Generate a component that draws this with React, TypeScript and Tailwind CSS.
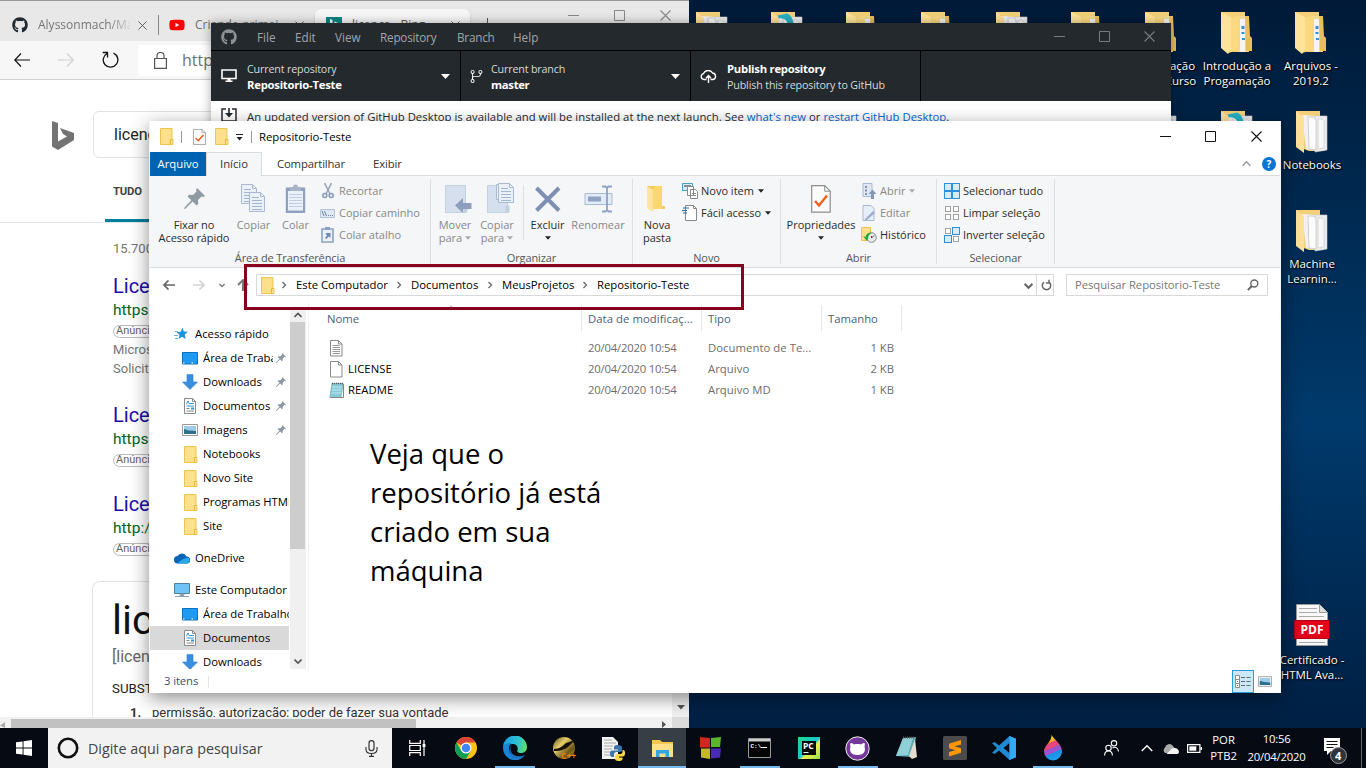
import React from 'react';
import { FaGithub, FaYoutube } from 'react-icons/fa';
import { GoGitBranch } from 'react-icons/go';

type Kids = { children?: React.ReactNode };

/* ---------- shared glyphs ---------- */

const FolderSmall = () => (
  <svg width="14" height="17" viewBox="0 0 14 17" className="shrink-0">
    <path d="M.5.5h11.500v11h1v5H.5z" fill="#ffe08a" stroke="#eac54f" />
    <path d="M10.500 11.500v5M10.500 11.500h2.500" stroke="#e3b83a" fill="none" />
  </svg>
);

const CheckDoc = ({ w, h }: { w: number; h: number }) => (
  <svg width={w} height={h} viewBox="0 0 20 28" preserveAspectRatio="none" className="shrink-0">
    <path d="M.7.7h13l5.500 5.500v21H.7z" fill="#fbfbfb" stroke="#8d8d8d" strokeWidth="1.200" />
    <path d="M13.700.7v5.500h5.500" fill="none" stroke="#8d8d8d" />
    <path d="M4 16l4 4.500 8-10" fill="none" stroke="#f0601c" strokeWidth="2.400" />
  </svg>
);

const Pin = ({ s, c }: { s: number; c: string }) => (
  <svg width={s} height={s} viewBox="0 0 20 20" className="shrink-0" fill={c}>
    <path d="M12.500 0L20 7.500l-1.500 1-1.800-.4-3.400 3.400.3 3.600-1.600 1.500-3.800-3.800L1.500 19.500 0 20l.5-1.500L7 11.600 3.300 8l1.600-1.600 3.700.3 3.300-3.300-.4-1.900z" />
  </svg>
);

const Caret = ({ c = '#222' }: { c?: string }) => (
  <svg width="6" height="4" viewBox="0 0 6 4" className="shrink-0"><path d="M0 .3h6L3 3.700z" fill={c} /></svg>
);

const Chevron = ({ d, s = 8, c = '#555', sw = 1.6 }: { d: string; s?: number; c?: string; sw?: number }) => (
  <svg width={s} height={s} viewBox="0 0 8 8" className="shrink-0"><path d={d} fill="none" stroke={c} strokeWidth={sw} /></svg>
);
const UP = 'M.5 6L4 2.500 7.500 6';
const DOWN = 'M.5 2.500L4 6l3.500-3.500';
const RIGHT = 'M2.500 1l3 3-3 3';

const Minus = ({ c, s = 11 }: { c: string; s?: number }) => (
  <svg width={s} height={s} viewBox="0 0 11 11"><path d="M0 5.500h11" stroke={c} /></svg>
);
const Square = ({ c, s = 11 }: { c: string; s?: number }) => (
  <svg width={s} height={s} viewBox="0 0 11 11"><path d="M.5.5h10v10H.5z" fill="none" stroke={c} /></svg>
);
const Cross = ({ c, s = 11 }: { c: string; s?: number }) => (
  <svg width={s} height={s} viewBox="0 0 11 11"><path d="M.5.5l10 10M10.500.5l-10 10" stroke={c} strokeWidth="1.100" /></svg>
);

/* ---------- desktop ---------- */

const DesktopFolder = ({ kind }: { kind: 'docs' | 'side' | 'teal' }) => (
  <svg width="34" height="44" viewBox="0 0 34 44" className="shrink-0">
    <path d="M1 1h24v22h4v18H14L1 36z" fill="#f3cf78" />
    {kind === 'side' && (
      <>
        <path d="M17 5h11v36H18z" fill="#f0d98f" />
        <path d="M20 8h5v33h-5z" fill="#f4f4f4" />
        <path d="M21.500 15h3v3h-3zM21.500 21h3v2h-3zM22 27h3v2h-3z" fill="#3b8fcb" />
        <path d="M25 5h4l1 20 2 2v13h-6z" fill="#e9bf5c" />
        <path d="M1 1l10 5v33l-3 4-7-6z" fill="#ffe39a" />
        <path d="M11 6l8-1v34l-11 3 3-4z" fill="#fbd981" />
      </>
    )}
    {kind !== 'side' && (
      <>
        <path d="M7 5l14 1 1 35-11-2z" fill="#f1f1f1" />
        <path d="M20 6h12v34l-12 2z" fill="#ededed" stroke="#cfcfcf" strokeWidth=".6" />
        <path d="M23 9h4l2 2v27l-6 1z" fill="#f8f8f8" stroke="#c8c8c8" strokeWidth=".6" />
        <path d="M13 7h6l2 3v30l-7-1z" fill="#fbfbfb" stroke="#c4c4c4" strokeWidth=".8" />
        {kind === 'teal' && <path d="M8 6c9-2 13 5 12 18 4-10 2-17-3-20z" fill="#25b2c4" stroke="#25b2c4" strokeWidth="3" />}
        <path d="M1 1l8 6v36l-8-6z" fill="#ffe09a" />
      </>
    )}
  </svg>
);

const DesktopLabel = ({ children }: Kids) => (
  <div className="w-[84px] text-center text-[11.500px] leading-[15px] whitespace-pre text-white [text-shadow:1px_1px_2px_#000,0_0_2px_#000]">
    {children}
  </div>
);

const folderRow: { x: string; kind: 'docs' | 'side' | 'teal' }[] = [
  { x: 'left-[695px]', kind: 'docs' },
  { x: 'left-[770px]', kind: 'teal' },
  { x: 'left-[845px]', kind: 'side' },
  { x: 'left-[920px]', kind: 'side' },
  { x: 'left-[995px]', kind: 'docs' },
  { x: 'left-[1070px]', kind: 'side' },
];

const DesktopItem = ({ pos, kind, label }: { pos: string; kind: 'docs' | 'side' | 'teal'; label: string }) => (
  <div className={`absolute flex w-[84px] flex-col items-center ${pos}`}>
    <DesktopFolder kind={kind} />
    <div className="h-[3px]" />
    <DesktopLabel>{label}</DesktopLabel>
  </div>
);

const Desktop = () => (
  <>
    {folderRow.map((f) => (
      <div key={f.x} className={`absolute top-[11px] ${f.x}`}>
        <DesktopFolder kind={f.kind} />
      </div>
    ))}
    <DesktopItem pos="left-[1119px] top-[11px]" kind="side" label={'Computação\nIntrod. Curso'} />
    <DesktopItem pos="left-[1195px] top-[11px]" kind="side" label={'Introdução a\nProgamação'} />
    <DesktopItem pos="left-[1269px] top-[11px]" kind="side" label={'Arquivos -\n2019.2'} />
    <DesktopItem pos="left-[1119px] top-[110px]" kind="teal" label="" />
    <DesktopItem pos="left-[1195px] top-[110px]" kind="teal" label="" />
    <DesktopItem pos="left-[1270px] top-[110px]" kind="docs" label="Notebooks" />
    <DesktopItem pos="left-[1270px] top-[209px]" kind="docs" label={'Machine\nLearnin...'} />
    <div className="absolute top-[603px] left-[1270px] flex w-[84px] flex-col items-center">
      <svg width="37" height="44" viewBox="0 0 37 44">
        <path d="M2.500 1.500h23l8 8v33h-31z" fill="#f8f8f8" stroke="#9a9a9a" />
        <path d="M25.500 1.500v8h8" fill="#ddd" stroke="#9a9a9a" />
        <path d="M5 5.500h18M5 9.500h18M5 13.500h25M5 39.500h26" stroke="#aaa" />
        <path d="M.5 17.500h35v18H.5z" fill="#e2001a" stroke="#b00014" />
        <text x="18" y="31" textAnchor="middle" fontFamily="Open Sans" fontWeight="700" fontSize="12" fill="#fff">PDF</text>
      </svg>
      <div className="h-[5px]" />
      <DesktopLabel>{'Certificado -\nHTML Ava...'}</DesktopLabel>
    </div>
  </>
);

/* ---------- browser ---------- */

const SearchHit = ({ url, children }: { url: string } & Kids) => (
  <div className="flex flex-col">
    <div className="h-[26px] text-[20px] leading-[26px] text-[#1a0dab]">Licença</div>
    <div className="h-[23px] text-[15.500px] leading-[23px] text-[#006621]">{url}</div>
    <div className="mt-[3px] flex h-[13px] w-[60px] items-center rounded-full border border-[#bbb] pl-[2px] text-[11px] text-[#666]">Anúncio</div>
    {children}
  </div>
);

const Browser = () => (
  <div className="absolute top-0 left-0 flex h-[728px] w-[689px] flex-col overflow-hidden bg-white">
    <div className="flex h-[41px] shrink-0 items-start border-t border-[#999] bg-[#e8e8e8] text-[12px] text-[#707070]">
      <div className="flex h-[40px] w-[158px] items-center pt-2 pl-3">
        <FaGithub size={16} color="#24292e" />
        <span className="ml-[10px] w-[92px] overflow-hidden bg-linear-to-r from-[#707070] from-75% to-[#d5d5d5] bg-clip-text whitespace-nowrap text-transparent">Alyssonmach/Ma</span>
        <span className="ml-2 flex"><Cross c="#555" s={9} /></span>
      </div>
      <div className="mt-[14px] h-[20px] w-px bg-[#888]" />
      <div className="flex h-[40px] w-[156px] items-center pt-2 pl-[10px]">
        <FaYoutube size={16} color="#ff0000" />
        <span className="ml-[10px] w-[92px] overflow-hidden whitespace-nowrap">Criando primei</span>
        <span className="ml-2 flex"><Cross c="#555" s={9} /></span>
      </div>
      <div className="mt-2 flex h-[32px] w-[155px] items-center rounded-t-md bg-[#f7f7f7] pl-[11px] shadow">
        <div className="flex size-4 items-center justify-center bg-[#0c8484]">
          <svg width="10" height="13" viewBox="0 0 10 13"><path d="M1 0l2.500 1v8L9 6 5 4l1-1.500 4 2v3L3.500 12 1 10.500z" fill="#fff" /></svg>
        </div>
        <span className="ml-[10px] text-[#555]">licença - Bing</span>
        <span className="ml-[26px] flex"><Cross c="#555" s={9} /></span>
      </div>
      <div className="ml-[17px] mt-[17px] h-[12px] w-px bg-[#555]" />
      <div className="mt-[9px] ml-[80px] flex gap-[35px]"><Minus c="#888" /><Square c="#888" /><Cross c="#888" /></div>
    </div>
    <div className="flex h-[39px] shrink-0 items-center border-b border-[#d0d0d0] bg-[#f7f7f7] pl-[14px]">
      <svg width="16" height="14" viewBox="0 0 16 14"><path d="M7 .5L.8 7 7 13.500M.8 7H16" fill="none" stroke="#111" strokeWidth="1.200" /></svg>
      <svg width="16" height="14" viewBox="0 0 16 14" className="ml-[28px]"><path d="M9 .5L15.200 7 9 13.500M15.200 7H0" fill="none" stroke="#d0d0d0" strokeWidth="1.200" /></svg>
      <svg width="17" height="18" viewBox="0 0 17 18" className="ml-[28px]">
        <path d="M5 2.500a7.300 7.300 0 1 0 6.500-.3M.7 1.500h4.800v5" fill="none" stroke="#111" strokeWidth="1.300" />
      </svg>
      <div className="ml-[19px] flex h-[31px] w-[540px] items-center rounded bg-white pl-[16px]">
        <svg width="13" height="17" viewBox="0 0 13 17"><path d="M.6 6.500h11.800v9.800H.6zM3 6.500V4a3.500 3.500 0 0 1 7 0v2.500" fill="none" stroke="#555" strokeWidth="1.200" /></svg>
        <span className="ml-[15px] text-[16px] text-[#707070]">https</span>
      </div>
    </div>
    <div className="flex h-[143px] shrink-0 flex-col border-b border-[#e6e6e6] font-['Roboto']">
      <div className="flex h-[78px] items-end">
        <svg width="22" height="30" viewBox="0 0 22 30" className="mb-[7px] ml-[52px]"><path d="M0 0l6 2v18.500l9-5-4-2.500-3-6 14 5v7L6 29 0 25.500z" fill="#737373" /></svg>
        <div className="ml-[19px] flex h-[47px] w-[580px] items-center rounded-md border border-[#e3e3e3] pl-5 text-[16px] text-[#222]">licença</div>
      </div>
      <div className="flex h-[64px] w-[80px] flex-col justify-between">
        <div className="pt-[26px] pl-[113px] text-[11.300px] leading-[16px] font-bold tracking-[-0.200px] text-[#444]">TUDO</div>
        <div className="ml-[105px] h-[3px] w-[60px] bg-[#00809d]" />
      </div>
    </div>
    <div className="flex h-[358px] shrink-0 flex-col pt-[17px] pl-[113px] font-['Roboto']">
      <div className="mb-[23px] h-[10px] text-[13px] leading-[18px] text-[#767676]">15.700</div>
      <SearchHit url="https:">
        <div className="mt-[2px] text-[13px] leading-[19px] text-[#767676]">Micros<br />Solicite</div>
      </SearchHit>
      <div className="h-[24px]" />
      <SearchHit url="https:" />
      <div className="h-[24px]" />
      <SearchHit url="http://" />
    </div>
    <div className="ml-[92px] flex h-[136px] w-[597px] shrink-0 flex-col overflow-hidden rounded-tl-lg border border-b-0 border-[#e3e3e3] pl-[19px] font-['Roboto']">
      <div className="mt-[13px] h-[50px] text-[41px] leading-[50px] text-[#111]">lice</div>
      <div className="mt-[2px] h-[20px] text-[16px] leading-[20px] text-[#666]">[licença]</div>
      <div className="mt-[11px] h-[22px] text-[13.300px] leading-[22px] text-[#222]">SUBSTANTIVO</div>
      <div className="flex text-[13px] leading-[25px] text-[#333]"><span className="w-[40px] pl-[18px] font-bold">1.</span><span className="tracking-[-0.030px]">permissão, autorização; poder de fazer sua vontade</span></div>
    </div>
    <div className="flex h-[11px] w-full shrink-0 items-end bg-[#f1f1f1]">
      <div className="flex w-[11px] items-center"><svg width="5" height="6" viewBox="0 0 5 6"><path d="M5 0v6L0 3.500z" fill="#aaa" /></svg></div>
      <div className="h-[9px] w-[405px] bg-[#c1c1c1]" />
      <svg width="6" height="7" viewBox="0 0 6 7" className="ml-[246px]"><path d="M0 0v7l4-3.500z" fill="#555" /></svg>
      <div className="ml-auto h-[11px] w-[17px] bg-[#dcdcdc]" />
    </div>
    <div className="absolute top-[80px] right-0 flex h-[637px] w-[17px] flex-col items-center justify-end bg-[#f1f1f1] pb-[7px]">
      <svg width="8" height="5" viewBox="0 0 8 5"><path d="M0 0h8L4 4.500z" fill="#555" /></svg>
    </div>
  </div>
);

/* ---------- GitHub Desktop ---------- */

const GitHubDesktop = () => (
  <div className="absolute top-[23px] left-[211px] flex h-[600px] w-[960px] flex-col bg-white shadow-[0_0_10px_rgba(0,0,0,0.35)]">
    <div className="flex h-[28px] shrink-0 items-center border-b border-black bg-[#24292e] text-[11.700px] text-[#a2a5a8]">
      <span className="ml-[10px]"><FaGithub size={16} color="#8d9093" /></span>
      <div className="ml-[20px] flex w-[797px] pt-[2px]">
        <span className="w-[38px]">File</span><span className="w-[40px]">Edit</span><span className="w-[45px]">View</span>
        <span className="w-[77px] tracking-[-0.200px]">Repository</span><span className="w-[56px] tracking-[-0.200px]">Branch</span><span>Help</span>
      </div>
      <div className="flex gap-[34px]"><Minus c="#777b7f" /><Square c="#777b7f" /><Cross c="#777b7f" /></div>
    </div>
    <div className="flex h-[50px] shrink-0 bg-[#24292e] text-[10.700px] leading-[16px] text-[#d6d9dc]">
      <div className="flex w-[250px] items-center border-r border-black pl-[10px]">
        <svg width="16" height="14" viewBox="0 0 16 14"><path d="M1 1h14v8.500H1z" fill="none" stroke="#fff" strokeWidth="1.600" /><path d="M6.500 9.500h3v2h2v1.500h-7v-1.500h2z" fill="#fff" /></svg>
        <div className="ml-[10px] w-[194px] pt-[2px]"><div className="tracking-[-0.150px]">Current repository</div><div className="text-[11.300px] font-bold tracking-[-0.250px] text-white">Repositorio-Teste</div></div>
        <svg width="9" height="5" viewBox="0 0 9 5"><path d="M0 0h9L4.500 5z" fill="#fff" /></svg>
      </div>
      <div className="flex w-[230px] items-center border-r border-black pl-[8px]">
        <GoGitBranch size={15} color="#fff" />
        <div className="ml-[7px] w-[180px] pt-[2px]"><div className="tracking-[-0.150px]">Current branch</div><div className="text-[11.300px] font-bold tracking-[-0.300px] text-white">master</div></div>
        <svg width="9" height="5" viewBox="0 0 9 5"><path d="M0 0h9L4.500 5z" fill="#fff" /></svg>
      </div>
      <div className="flex w-[230px] items-center border-r border-black pl-[9px]">
        <svg width="17" height="13" viewBox="0 0 17 13"><path d="M6.500 9.500H4A3 3 0 0 1 3.500 3.600 5 5 0 0 1 12.500 3 3.300 3.300 0 0 1 13 9.500h-2.500M8.500 13V6M6 8.300L8.500 5.600 11 8.300" fill="none" stroke="#fff" strokeWidth="1.400" /></svg>
        <div className="ml-[10px] pt-[2px]"><div className="text-[11.300px] font-bold tracking-[-0.250px] text-white">Publish repository</div><div className="tracking-[-0.140px]">Publish this repository to GitHub</div></div>
      </div>
    </div>
    <div className="flex items-start pt-[7px] pl-[10px] text-[11.300px] text-[#24292e]">
      <svg width="16" height="14" viewBox="0 0 16 14"><path d="M5 1H1v12h14V1h-4" fill="none" stroke="#24292e" strokeWidth="1.500" /><path d="M7.200 0h1.600v5H12l-4 4.500L4 5h3.200z" fill="#24292e" /></svg>
      <div className="ml-[10px] leading-[18px] tracking-[0.040px] whitespace-nowrap">An updated version of GitHub Desktop is available and will be installed at the next launch. See <span className="text-[#0366d6]">what's new</span> or <span className="text-[#0366d6]">restart GitHub Desktop</span>.</div>
    </div>
  </div>
);

/* ---------- ribbon ---------- */

const Group = ({ w, label, children }: { w: string; label: string } & Kids) => (
  <div className={`flex flex-col ${w}`}>
    <div className="flex h-[74px]">{children}</div>
    <div className="h-[16px] text-center leading-[16px] tracking-[-0.100px] text-[#555]">{label}</div>
  </div>
);
const GroupRule = () => <div className="mt-[3px] h-[85px] w-px bg-[#dfe0e2]" />;

const Big = ({ w, icon, lines, dim, arrow }: { w: string; icon: React.ReactNode; lines: string[]; dim?: boolean; arrow?: boolean }) => (
  <div className={`flex flex-col items-center ${w} ${dim ? 'text-[#888]' : 'text-[#2b2b2b]'}`}>
    <div className="flex h-[42px] items-center justify-center pt-[3px]">{icon}</div>
    {lines.map((l, i) => (
      <div key={l} className="flex h-[13px] items-center gap-[3px] leading-[13px] whitespace-nowrap">
        {l}{arrow && lines.length > 1 && i === 1 && <Caret c="#aaa" />}
      </div>
    ))}
    {arrow && lines.length === 1 && <div className="flex h-[13px] items-center"><Caret /></div>}
  </div>
);

const Small = ({ icon, text, dim, arrow }: { icon: React.ReactNode; text: string; dim?: boolean; arrow?: boolean }) => (
  <div className={`flex h-[22px] items-center whitespace-nowrap ${dim ? 'text-[#888]' : 'text-[#2b2b2b]'}`}>
    <div className="flex w-[19px] items-center">{icon}</div>
    <span>{text}</span>
    {arrow && <span className="ml-[4px]"><Caret c={dim ? '#aaa' : '#222'} /></span>}
  </div>
);

const Sheet = ({ x, y }: { x: number; y: number }) => (
  <g transform={`translate(${x} ${y})`}>
    <path d="M.5.5h11l4 4v15H.5z" fill="#e9f0f8" stroke="#a9b9d0" />
    <path d="M11.500.5v4h4" fill="none" stroke="#a9b9d0" />
    <path d="M3 5.500h7M3 8.500h10M3 11.500h10M3 14.500h10M3 17.500h10" stroke="#a3b5cf" />
  </g>
);

const CopyIcon = () => <svg width="25" height="29" viewBox="0 0 25 29"><Sheet x={0} y={0} /><Sheet x={8} y={8} /></svg>;
const Clipboard = () => (
  <svg width="21" height="30" viewBox="0 0 21 30">
    <path d="M.8 3.500h19.400v25.500H.8z" fill="#8fa1c0" /><path d="M3 7h15v19.500H3z" fill="#eaf1fa" />
    <path d="M5 3h3a2.500 2.500 0 0 1 5 0h3v4H5z" fill="#a9b4c6" />
    <path d="M4 10.500h13M4 13.500h13M4 16.500h13M4 19.500h13M4 22.500h13" stroke="#c0cde2" />
  </svg>
);
const MoveIcon = ({ copy }: { copy?: boolean }) => (
  <svg width="27" height="31" viewBox="0 0 27 31">
    <path d="M.5 2.500h20v27H.5z" fill="#d5dfee" stroke="#c3d0e3" /><path d="M18.500 22.500h4v7h-4z" fill="#c3d0e3" />
    {copy ? <g><path d="M9.500 1.500h6v15h-6z" fill="#e9f0f8" stroke="#a9b9d0" /><Sheet x={11} y={0} /></g> : <path d="M10 22.500l8-7.500v5h8.500v6H18v4z" fill="#8e9fbd" />}
  </svg>
);
const SelectIcon = ({ on }: { on: boolean[] }) => (
  <svg width="16" height="16" viewBox="0 0 16 16">
    {on.map((v, i) => (
      <rect key={i} x={(i % 2) * 8 + (v ? 0.5 : 1.5)} y={Math.floor(i / 2) * 8 + (v ? 0.5 : 1.5)} width={v ? 7 : 5} height={v ? 7 : 5} fill={v ? '#d4ecfb' : '#fff'} stroke={v ? '#2e8fdc' : '#a0a0a0'} />
    ))}
  </svg>
);

const Ribbon = () => (
  <div className="flex h-[92px] shrink-0 border-b border-[#dadbdc] bg-[#f5f6f7] text-[11px]">
    <Group w="w-[280px]" label="Área de Transferência">
      <div className="w-[4px]" />
      <Big w="w-[80px] tracking-[-0.080px]" icon={<Pin s={21} c="#8f9ba3" />} lines={['Fixar no', 'Acesso rápido']} />
      <Big w="w-[39px]" dim icon={<CopyIcon />} lines={['Copiar']} />
      <Big w="w-[45px]" dim icon={<Clipboard />} lines={['Colar']} />
      <div className="mt-[4px] ml-[2px]">
        <Small dim text="Recortar" icon={<svg width="14" height="16" viewBox="0 0 14 16" className="ml-[2px]"><path d="M2.500 0l5.500 11M9.500 0L4 11" stroke="#9aa5b5" strokeWidth="1.600" /><circle cx="2.800" cy="12.500" r="2" fill="none" stroke="#8699bc" strokeWidth="1.600" /><circle cx="9.200" cy="12.500" r="2" fill="none" stroke="#8699bc" strokeWidth="1.600" /></svg>} />
        <Small dim text="Copiar caminho" icon={<svg width="15" height="9" viewBox="0 0 15 9"><path d="M.5.5h14v8H.5z" fill="#dfe8f4" stroke="#b4c3da" /><path d="M2 2l2 5M4.500 2l2 5M8 6.500h1M10 6.500h1M12 6.500h1" stroke="#6c7f9f" /></svg>} />
        <Small dim text="Colar atalho" icon={<svg width="14" height="16" viewBox="0 0 14 16" className="ml-px"><path d="M1 2h11v13H1z" fill="#eaf1fa" stroke="#8fa1c0" strokeWidth="1.600" /><path d="M4 0h5v3H4z" fill="#8fa1c0" /><path d="M4.500 6h5v5L7.800 9.300 5.500 12 4 11l2-2.500z" fill="#6f86b0" /></svg>} />
      </div>
    </Group>
    <GroupRule />
    <Group w="w-[201px]" label="Organizar">
      <div className="w-[3px]" />
      <Big w="w-[42px]" dim arrow icon={<span className="pl-[6px]"><MoveIcon /></span>} lines={['Mover', 'para']} />
      <Big w="w-[42px]" dim arrow icon={<span className="pl-[6px]"><MoveIcon copy /></span>} lines={['Copiar', 'para']} />
      <div className="mt-[9px] ml-[5px] h-[55px] w-px bg-[#dfe0e2]" />
      <Big w="w-[47px]" arrow icon={<svg width="26" height="26" viewBox="0 0 26 26" className="ml-px"><path d="M1.500 2L24 24.500M24 2L1.500 24.500" stroke="#7d90b2" strokeWidth="4" /></svg>} lines={['Excluir']} />
      <Big w="w-[54px]" dim icon={<svg width="29" height="28" viewBox="0 0 29 28"><path d="M1 8.500h27v11H1z" fill="#e3ebf6" stroke="#a9bad3" /><path d="M4 11.500h13v5H4z" fill="#8fa1c4" /><path d="M18 1.500h3.500L23 3l1.500-1.500H28M23 3v22M18 26.500h3.500L23 25l1.500 1.500H28" fill="none" stroke="#8fa1c4" strokeWidth="1.800" /></svg>} lines={['Renomear']} />
    </Group>
    <GroupRule />
    <Group w="w-[147px]" label="Novo">
      <div className="w-[4px]" />
      <Big w="w-[40px]" icon={<svg width="20" height="28" viewBox="0 0 20 28" className="mr-[3px]"><path d="M1 1h15v20h3v3H3z" fill="#f4cc5c" /><path d="M1 1l6 4v22l-6-4z" fill="#ffe59d" /><path d="M7 5l2-4h7v23H7z" fill="#fbd774" /></svg>} lines={['Nova', 'pasta']} />
      <div className="mt-[4px] ml-[5px]">
        <Small arrow text="Novo item" icon={<svg width="16" height="16" viewBox="0 0 16 16"><path d="M.5.5h10v7H.5z" fill="#d7ecf7" stroke="#4b9bc4" /><path d="M2 3h7" stroke="#333" /><path d="M5.500 3.500h6v9h-6zM8.500 6.500h5l2 2v7h-7z" fill="#fff" stroke="#888" /><path d="M10 10.500h4M10 12.500h4" stroke="#888" /></svg>} />
        <Small arrow text="Fácil acesso" icon={<svg width="16" height="16" viewBox="0 0 16 16"><path d="M3.500.5h8l3 3v12h-11z" fill="#fff" stroke="#888" /><path d="M11.500.5v3h3" fill="none" stroke="#888" /><path d="M1 3h6M0 5.500h5M1 8h4" stroke="#1a6fb8" strokeWidth="1.200" /></svg>} />
      </div>
    </Group>
    <GroupRule />
    <Group w="w-[155px]" label="Abrir">
      <div className="w-[2px]" />
      <Big w="w-[76px]" arrow icon={<CheckDoc w={20} h={28} />} lines={['Propriedades']} />
      <div className="mt-[4px] ml-[2px]">
        <Small dim arrow text="Abrir" icon={<svg width="15" height="16" viewBox="0 0 15 16" className="ml-px"><path d="M1 .5h9v13H1z" fill="#dfe8f4" stroke="#a9b9d0" /><path d="M3 3h2v2H3zM3 6.500h2v2H3zM3 10h2v2H3z" fill="#7d90b2" /><path d="M9 16v-5H6.500l4-4.500 4 4.500H12v5z" fill="#8396b8" /></svg>} />
        <Small dim text="Editar" icon={<svg width="14" height="16" viewBox="0 0 14 16" className="ml-px"><path d="M1 .5h8l3 3v12H1z" fill="#e6eef8" stroke="#a9b9d0" /><path d="M3 14l8-8 2 2-8 7H3z" fill="#9db0d0" /></svg>} />
        <Small text="Histórico" icon={<svg width="16" height="16" viewBox="0 0 16 16"><path d="M.5.5h9v13h-9z" fill="#ffe08a" stroke="#eac54f" /><circle cx="10.500" cy="10.500" r="4.800" fill="#e9e9e9" stroke="#888" /><path d="M10.500 11l2.500-2.500M10.500 11v-2" stroke="#444" fill="none" /><path d="M2 9l4 5 1-2c0-3 1-5 4-6-4-.5-6 1-6.500 4z" fill="#21a637" /></svg>} />
      </div>
    </Group>
    <GroupRule />
    <Group w="w-[117px]" label="Selecionar">
      <div className="mt-[4px] ml-[7px]">
        <Small text="Selecionar tudo" icon={<SelectIcon on={[true, true, true, true]} />} />
        <Small text="Limpar seleção" icon={<SelectIcon on={[false, false, false, false]} />} />
        <Small text="Inverter seleção" icon={<SelectIcon on={[false, true, true, false]} />} />
      </div>
    </Group>
    <GroupRule />
  </div>
);

/* ---------- explorer ---------- */

const DesktopIcon = () => <svg width="16" height="13" viewBox="0 0 16 13"><path d="M.5.5h15v11.500H.5z" fill="#1e9bf0" stroke="#0e72bd" /><path d="M1 11h14" stroke="#fff" strokeDasharray="1.500 7" /></svg>;
const DownloadIcon = () => <svg width="16" height="16" viewBox="0 0 16 16"><path d="M5 .5h6V8h4.500L8 15.500.5 8H5z" fill="#3a8ee0" stroke="#2f7fce" strokeWidth=".6" /></svg>;
const DocIcon = () => (
  <svg width="13" height="16" viewBox="0 0 13 16"><path d="M.5.5h8l3 3v12H.5z" fill="#fff" stroke="#8a8a8a" /><path d="M8.500.5v3h3" stroke="#8a8a8a" fill="none" /><path d="M2.500 6l1.500-3 1.500 3M6 5.500h4M2.500 8h7.500" stroke="#3a93d6" fill="none" /><path d="M2.500 10.500h3M2.500 13h7.500" stroke="#888" /><path d="M7 9.500h3v2H7z" fill="#3a93d6" /></svg>
);
const PicIcon = ({ w = 16, h = 12 }: { w?: number; h?: number }) => (
  <svg width={w} height={h} viewBox="0 0 16 12"><path d="M.5.5h15v11H.5z" fill="#fff" stroke="#999" /><path d="M2 2h12v8H2z" fill="#9ecbe8" /><path d="M2 5l5 1.500 7 .5v3H2z" fill="#2c6e8c" /></svg>
);

const NavRow = ({ icon, text, deep, pin, sel }: { icon: React.ReactNode; text: string; deep?: boolean; pin?: boolean; sel?: boolean }) => (
  <div className={`flex h-[24px] w-[139px] shrink-0 items-center overflow-hidden whitespace-nowrap ${deep ? 'pl-[32px]' : 'pl-[24px]'} ${sel ? 'bg-[#d9d9d9]' : ''}`}>
    <div className="flex w-[16px] shrink-0 justify-center">{icon}</div>
    <span className={`ml-[5px] overflow-hidden ${pin ? 'w-[70px] shrink-0' : ''}`}>{text}</span>
    {pin && <span className="ml-[3px]"><Pin s={10} c="#8e99a3" /></span>}
  </div>
);
const NavFolder = () => <span className="ml-[2px] flex"><FolderSmall /></span>;

const Sidebar = () => (
  <div className="flex h-[366px] w-[156px]">
    <div className="flex w-[140px] flex-col overflow-hidden pt-[19px] text-black">
      <NavRow text="Acesso rápido" icon={<svg width="16" height="14" viewBox="0 0 16 14"><path d="M8.500.5l1.300 4 4.200.3-3.300 2.700 1 4.500-3.700-2.300L4.500 12l1-4.200L2.500 5.200l4.200-.5z" fill="#1e90e0" /><path d="M1 4.500h3M0 8.500h4M1 11.500h3" stroke="#6ab7ee" /></svg>} />
      <NavRow deep pin text="Área de Traba" icon={<DesktopIcon />} />
      <NavRow deep pin text="Downloads" icon={<DownloadIcon />} />
      <NavRow deep pin text="Documentos" icon={<DocIcon />} />
      <NavRow deep pin text="Imagens" icon={<PicIcon />} />
      <NavRow deep text="Notebooks" icon={<NavFolder />} />
      <NavRow deep text="Novo Site" icon={<NavFolder />} />
      <NavRow deep text="Programas HTML" icon={<NavFolder />} />
      <NavRow deep text="Site" icon={<NavFolder />} />
      <div className="h-[8px] shrink-0" />
      <NavRow text="OneDrive" icon={<svg width="16" height="11" viewBox="0 0 16 11"><path d="M4 10.500A3.700 3.700 0 0 1 3.500 3 5 5 0 0 1 12.500 3.500 3.500 3.500 0 0 1 13 10.500z" fill="#0a64b8" /><path d="M3 10.500L9 6l5-1.500A3.200 3.200 0 0 1 13 10.500z" fill="#28a8ea" /></svg>} />
      <div className="h-[8px] shrink-0" />
      <NavRow text="Este Computador" icon={<svg width="16" height="15" viewBox="0 0 16 15"><path d="M.5.5h15v10H.5z" fill="#6fc3f5" stroke="#4b7f9f" /><path d="M6 11h4v1.500H6zM1 13.500h14" fill="#8aa" stroke="#8fa3b3" /></svg>} />
      <NavRow deep text="Área de Trabalho" icon={<DesktopIcon />} />
      <NavRow deep sel text="Documentos" icon={<DocIcon />} />
      <NavRow deep text="Downloads" icon={<DownloadIcon />} />
    </div>
    <div className="mt-[4px] flex h-[362px] w-[16px] flex-col items-center justify-between bg-[#f0f0f0]">
      <div className="flex h-[15px] items-center"><Chevron d={UP} c="#555" /></div>
      <div className="h-[227px] w-[15px] self-start bg-[#cdcdcd]" />
      <div className="h-[104px]" />
      <div className="flex h-[16px] items-center"><Chevron d={DOWN} c="#555" /></div>
    </div>
  </div>
);

const files = [
  { name: '', date: '20/04/2020 10:54', type: 'Documento de Te...', size: '1 KB' },
  { name: 'LICENSE', date: '20/04/2020 10:54', type: 'Arquivo', size: '2 KB' },
  { name: 'README', date: '20/04/2020 10:54', type: 'Arquivo MD', size: '1 KB' },
];

const FileIcon = ({ i }: { i: number }) =>
  i === 2 ? (
    <svg width="16" height="17" viewBox="0 0 16 17"><path d="M3 1.500h11L12 15.500H.8z" fill="#86cbd8" stroke="#68a6b3" strokeWidth=".7" /><path d="M14.500 2v13.500H2" fill="none" stroke="#8b8378" /><path d="M3 5h10M3 8h9.500M2.500 11h10" stroke="#c2e8ee" /><path d="M3 1.500h12" stroke="#555" strokeWidth="1.500" strokeDasharray="1 1" /></svg>
  ) : (
    <svg width="13" height="17" viewBox="0 0 13 17" className="ml-px"><path d="M.5.5h8l3.500 3.500v12H.5z" fill="#fff" stroke="#8a8a8a" /><path d="M8.500.5V4H12" fill="none" stroke="#8a8a8a" />{i === 0 && <path d="M2.500 5.500h7M2.500 7.500h7.500M2.500 9.500h7.500M2.500 11.500h7.500M2.500 13.500h7.500" stroke="#9a9a9a" />}</svg>
  );

const FileList = () => (
  <div className="flex flex-col border-l border-[#f0f0f0] pt-[2px]">
    <div className="flex h-[26px] leading-[27px] text-[#4c607a]">
      <div className="relative w-[273px] border-r border-[#e5e5e5] pl-[18px]">Nome
        <span className="absolute top-[-1px] left-[139px]"><Chevron d={UP} s={6} c="#999" sw={1} /></span>
      </div>
      <div className="w-[120px] border-r border-[#e5e5e5] pl-[6px] tracking-[0.060px]">Data de modificaç...</div>
      <div className="w-[120px] border-r border-[#e5e5e5] pl-[6px]">Tipo</div>
      <div className="w-[80px] border-r border-[#e5e5e5] pl-[6px]">Tamanho</div>
    </div>
    <div className="mt-[7px] flex flex-col text-[#6d6d6d]">
      {files.map((f, i) => (
        <div key={i} className="flex h-[21px] items-center">
          <div className="flex w-[279px] items-center pl-[20px] text-black">
            <div className="flex w-[19px]"><FileIcon i={i} /></div><span className="tracking-[0.050px]">{f.name}</span>
          </div>
          <div className="w-[120px] tracking-[-0.200px]">{f.date}</div>
          <div className="w-[120px] tracking-[0.050px]">{f.type}</div>
          <div className="w-[66px] text-right">{f.size}</div>
        </div>
      ))}
    </div>
  </div>
);

const Crumb = ({ children, w }: { w: string } & Kids) => (
  <div className={`flex shrink-0 items-center whitespace-nowrap ${w}`}>
    <Chevron d={RIGHT} c="#666" sw={1.3} />
    <span className="ml-[8px]">{children}</span>
  </div>
);

const Explorer = () => (
  <div className="absolute top-[121px] left-[149px] flex h-[572px] w-[1132px] flex-col border-x border-[#f4f4f4] bg-white text-[11.300px] shadow-[0_5px_18px_rgba(0,0,0,0.45)]">
    <div className="flex h-[31px] shrink-0 items-center pl-[10px]">
      <FolderSmall />
      <div className="ml-[7px] h-[12px] w-px bg-[#999]" />
      <span className="ml-[11px] flex pt-px"><CheckDoc w={13} h={16} /></span>
      <span className="ml-[9px] flex"><FolderSmall /></span>
      <svg width="7" height="7" viewBox="0 0 7 7" className="mt-px ml-[7px]"><path d="M0 .5h7" stroke="#222" /><path d="M.5 3h6l-3 3.500z" fill="#222" /></svg>
      <div className="ml-[8px] h-[12px] w-px bg-[#999]" />
      <span className="ml-[7px] w-[901px] pt-[2px] text-black">Repositorio-Teste</span>
      <Minus c="#111" /><span className="w-[34px]" /><Square c="#111" /><span className="w-[35px]" /><Cross c="#111" />
    </div>
    <div className="flex h-[24px] shrink-0 text-[11.300px] leading-[23px] text-[#333]">
      <div className="w-[56px] bg-[#0063b1] text-center leading-[24px] text-white">Arquivo</div>
      <div className="w-[56px] border border-b-0 border-[#dadbdc] bg-[#f5f6f7] text-center leading-[22px]">Início</div>
      <div className="flex grow items-center border-b border-[#dadbdc]">
        <span className="ml-[15px] w-[96px] tracking-[-0.150px]">Compartilhar</span>
        <span className="w-[870px] tracking-[-0.100px]">Exibir</span>
        <span className="ml-[-1px]"><Chevron d={UP} s={9} c="#999" sw={1.2} /></span>
        <span className="ml-[11px] flex size-[14px] items-center justify-center rounded-full bg-[#0a74d4] text-[10px] leading-none font-bold text-white">?</span>
      </div>
    </div>
    <Ribbon />
    <div className="flex h-[34px] shrink-0 items-center text-black">
      <svg width="12" height="10" viewBox="0 0 12 10" className="ml-[13px]"><path d="M5.500.5L1 5l4.500 4.500M1 5h11" fill="none" stroke="#666" strokeWidth="1.700" /></svg>
      <svg width="12" height="10" viewBox="0 0 12 10" className="ml-[18px]"><path d="M6.500.5L11 5 6.500 9.500M11 5H0" fill="none" stroke="#d3d3d3" strokeWidth="1.700" /></svg>
      <span className="ml-[14px]"><Chevron d={DOWN} s={6} c="#777" sw={1.800} /></span>
      <svg width="12" height="12" viewBox="0 0 12 12" className="ml-[12px]"><path d="M1 6l5-5 5 5M6 1v11" fill="none" stroke="#777" strokeWidth="2" /></svg>
      <div className="ml-[7px] flex h-[22px] w-[798px] items-center border border-[#d9d9d9] pl-[4px]">
        <FolderSmall />
        <span className="w-[5px]" />
        <Crumb w="w-[115px]">Este Computador</Crumb>
        <Crumb w="w-[91px]">Documentos</Crumb>
        <Crumb w="w-[95px]">MeusProjetos</Crumb>
        <Crumb w="w-[443px]">Repositorio-Teste</Crumb>
        <Chevron d={DOWN} s={9} c="#666" sw={1.800} />
        <div className="ml-[3px] h-full w-px bg-[#d9d9d9]" />
        <svg width="11" height="12" viewBox="0 0 11 12" className="ml-[4px]"><path d="M3 2.700A4.200 4.200 0 1 0 8 2.700M4.800 3.500H8V.3" transform="translate(0 .4)" fill="none" stroke="#666" strokeWidth="1.500" /></svg>
      </div>
      <div className="ml-[12px] flex h-[22px] w-[202px] items-center justify-between border border-[#d9d9d9] pr-[8px] pl-[8px] text-[#777]">
        <span className="tracking-[-0.050px]">Pesquisar Repositorio-Teste</span>
        <svg width="12" height="12" viewBox="0 0 12 12"><circle cx="7.300" cy="4.500" r="3.500" fill="none" stroke="#666" strokeWidth="1.400" /><path d="M4.800 7L.8 11.200" stroke="#666" strokeWidth="1.900" /></svg>
      </div>
    </div>
    <div className="mt-px flex h-[367px] shrink-0">
      <div className="mr-[2px]"><Sidebar /></div>
      <FileList />
    </div>
    <div className="flex h-[23px] items-center text-[#33507a]">
      <span className="ml-[14px] w-[44px] tracking-[-0.100px]">3 itens</span>
      <div className="h-[12px] w-px bg-[#e5e5e5]" />
      <div className="ml-[1023px] flex h-[23px] w-[22px] items-center justify-center border border-[#2b9be0] bg-[#cce8f6]">
        <svg width="16" height="13" viewBox="0 0 16 13"><path d="M.5.5h4v4h-4zM.5 4.500h4v4h-4zM.5 8.500h4v4h-4z" fill="#fff" stroke="#8a8a8a" /><path d="M6 2.500h4M11.500 2.500h4M6 6.500h4M11.500 6.500h4M6 10.500h4M11.500 10.500h4" stroke="#666" /><path d="M2 6h1v1H2z" fill="#27c" /><path d="M2 10h1v1H2z" fill="#d22" /></svg>
      </div>
      <span className="ml-[4px]"><PicIcon w={14} h={11} /></span>
    </div>
  </div>
);

/* ---------- taskbar ---------- */

const Task = ({ children, open, active }: { open?: boolean; active?: boolean } & Kids) => (
  <div className={`flex h-[40px] w-[48.900px] shrink-0 flex-col items-center ${active ? 'bg-[#383e45]' : ''}`}>
    <div className="flex h-[38px] items-center justify-center pt-[2px]">{children}</div>
    <div className={`h-[2px] ${active ? 'w-[48px]' : 'w-[40px]'} ${open || active ? 'bg-[#76b9ed]' : ''}`} />
  </div>
);

const Taskbar = () => (
  <div className="absolute top-[728px] left-0 flex h-[40px] w-[1366px] items-center bg-[#060a12] text-[12px] text-white">
    <div className="flex w-[48px] justify-center">
      <svg width="16" height="16" viewBox="0 0 16 16"><path d="M0 2.300L6.600 1.400v6.100H0zM7.500 1.200L16 0v7.500H7.500zM0 8.500h6.600v6.100L0 13.700zM7.500 8.500H16V16l-8.500-1.200z" fill="#fff" /></svg>
    </div>
    <div className="flex h-[40px] w-[344px] items-center bg-[#f2f2f2] pl-[9px]">
      <svg width="22" height="22" viewBox="0 0 22 22"><circle cx="11" cy="11" r="9.200" fill="none" stroke="#111" strokeWidth="2.600" /></svg>
      <span className="ml-[9px] w-[275px] pt-px text-[14.300px] text-[#444]">Digite aqui para pesquisar</span>
      <svg width="13" height="17" viewBox="0 0 13 17" className="ml-[2px]"><rect x="4" y=".6" width="5" height="10" rx="2.300" fill="none" stroke="#333" strokeWidth="1.200" /><path d="M1 7v2.500c0 3 2.500 4 5.500 4s5.500-1 5.500-4V7M6.500 13.500v3M4 16.400h5" fill="none" stroke="#333" strokeWidth="1.100" /></svg>
    </div>
    <div className="flex w-[50px] justify-center">
      <svg width="17" height="16" viewBox="0 0 17 16"><path d="M.7 0v3.300h10.600V0M.7 16v-3.300h10.600V16M.7 5.500h10.600v5H.7zM15 0v16" fill="none" stroke="#fff" strokeWidth="1.200" /><path d="M13.600 4h2.800v3h-2.800z" fill="#fff" /></svg>
    </div>
    <Task>
      <svg width="24" height="24" viewBox="0 0 24 24"><circle cx="12" cy="12" r="11" fill="#fbc116" /><path d="M12 12L2.500 6.500A11 11 0 0 1 21.500 6.500H12z" fill="#db4437" /><path d="M2.500 6.500A11 11 0 0 0 12 23l4.800-8.300L12 12 7.200 14.500z" fill="#0f9d58" /><circle cx="12" cy="12" r="5.500" fill="#fff" /><circle cx="12" cy="12" r="4.300" fill="#4285f4" /></svg>
    </Task>
    <Task open>
      <svg width="24" height="24" viewBox="0 0 24 24">
        <defs>
          <linearGradient id="edgeTop" x1="0" y1=".3" x2="1" y2=".5"><stop offset="0" stopColor="#1b9de2" /><stop offset=".6" stopColor="#2bc3d2" /><stop offset="1" stopColor="#5fe06a" /></linearGradient>
          <linearGradient id="edgeLow" x1="0" y1="0" x2="0" y2="1"><stop offset="0" stopColor="#0c59a4" /><stop offset="1" stopColor="#1b7fd0" /></linearGradient>
        </defs>
        <path d="M0 12A12 12 0 0 1 24 11c0 4-3 6-6.500 6S14 15 14.500 14c1-3-1-6-5-6C4 8 0 10 0 12z" fill="url(#edgeTop)" />
        <path d="M0 12c0-3 4-5.500 8.500-5C6 9 5 13 7 17s8 5.500 14.500 2.500A12 12 0 0 1 0 12z" fill="#1b83d8" />
        <path d="M9 9c-3 4-1 9 3 10.500s7 .8 10-.8A12 12 0 0 1 12 24C6 22 4.500 13 9 9z" fill="url(#edgeLow)" />
      </svg>
    </Task>
    <Task>
      <svg width="25" height="24" viewBox="0 0 25 24">
        <defs><linearGradient id="gold" x1="0" y1="0" x2="1" y2="1"><stop offset="0" stopColor="#5b4a13" /><stop offset=".35" stopColor="#e6cf6b" /><stop offset=".7" stopColor="#6d5615" /><stop offset="1" stopColor="#c29a2a" /></linearGradient></defs>
        <circle cx="12" cy="12" r="11" fill="url(#gold)" /><path d="M2 13c5 0 9-3 12-6l9-3-5 5c-4 4-8 6-16 6z" fill="#171308" />
        <text x="9" y="23" fontSize="8.500" fontWeight="700" fontFamily="Open Sans" fill="#f27d16">C++</text>
      </svg>
    </Task>
    <Task>
      <svg width="24" height="25" viewBox="0 0 24 25"><path d="M1 1h11l5 5v17H1z" fill="#f3f3f3" /><path d="M3 4h8M3 7h12M3 10h9M3 13h8M3 16h7M3 19h8" stroke="#aaa" strokeWidth="1.200" />
        <path d="M17 9c-4 0-4 1.500-4 3v1.500h4v1h-5.500C9 14.500 9 17 9 18s.5 3 2.500 3H13v-2.500c0-1.500 1-2.500 2.500-2.500H19c1.500 0 2-1 2-2v-2.500c0-1.500-2-2.500-4-2.500z" fill="#3a77ab" />
        <path d="M21.500 14h.5c2 0 2 2 2 3.500s-.5 3-2.500 3H18v1h3.500V23c0 1.500-2 2-4 2s-3.500-.8-3.500-2v-3c0-1 1-2 2-2h3.500c1.500 0 2-1.200 2-2z" fill="#ffd845" /></svg>
    </Task>
    <Task active>
      <svg width="23" height="19" viewBox="0 0 23 19"><path d="M1 1h8l2 2h11v15H1z" fill="#f5c64d" /><path d="M1 5h21v13H1z" fill="#ffe08a" /><path d="M5 18v-7h13v7h-3.500v-3.500h-6V18z" fill="#33a6e3" /></svg>
    </Task>
    <Task>
      <svg width="23" height="24" viewBox="0 0 23 24"><path d="M1 1l10 1v9.500H1z" fill="#d1281d" /><path d="M12 2l10-1-1 10h-9z" fill="#59b52a" /><path d="M2 12.500h9V23l-9-1.500z" fill="#c5b62b" /><path d="M12 12.500h10l-1 9-9 1z" fill="#4a2bb5" /></svg>
    </Task>
    <Task open>
      <svg width="23" height="20" viewBox="0 0 23 20"><path d="M.5.500h22v19H.5z" fill="#050505" stroke="#9a9a9a" /><path d="M1 1h21v2.500H1z" fill="#ccc" /><text x="2.500" y="10" fontSize="6" fontFamily="Liberation Mono" fontWeight="700" fill="#fff">C:\</text><path d="M13 9.500h6" stroke="#fff" /></svg>
    </Task>
    <Task>
      <svg width="22" height="22" viewBox="0 0 22 22">
        <defs><linearGradient id="pc" x1="0" y1="0" x2="1" y2="1"><stop offset="0" stopColor="#21d789" /><stop offset=".5" stopColor="#18c6d2" /><stop offset=".6" stopColor="#f3f14c" /><stop offset="1" stopColor="#8fe04c" /></linearGradient></defs>
        <path d="M0 0h22v22H0z" fill="url(#pc)" /><path d="M4 4h14v14H4z" fill="#0a0a0a" /><text x="5" y="11.500" fontSize="8.500" fontWeight="700" fontFamily="Open Sans" fill="#fff">PC</text><path d="M5.500 15.500h5" stroke="#fff" /></svg>
    </Task>
    <Task open>
      <svg width="25" height="25" viewBox="0 0 25 25"><circle cx="12.500" cy="12.500" r="11.700" fill="#74389b" stroke="#eee" /><path d="M5.500 7c2 0 3 1 3.500 1.500 2-.6 5-.6 7 0C17 7.500 18 7 19.500 7c.5 1.500.3 3 0 3.500 1.500 5-1 8.500-7 8.500s-8.500-3.500-7-8.500c-.3-.5-.5-2 0-3.500z" fill="#fff" /></svg>
    </Task>
    <Task>
      <svg width="23" height="24" viewBox="0 0 23 24"><path d="M8 2l13-1-4 20-16-1z" fill="#5fa6b2" /><path d="M8 2l10 0-5 17-12 1z" fill="#8fcfd8" /><path d="M20 3l2 18-5 2-3-3z" fill="#e4ddd0" /><path d="M8 1.500h12" stroke="#555" strokeWidth="2" strokeDasharray="1 1" /></svg>
    </Task>
    <Task>
      <svg width="24" height="24" viewBox="0 0 24 24"><rect width="24" height="24" rx="1.500" fill="#4b4b4b" /><path d="M18 4L6 7.700v4.500l6.500 2L6 16v4.500l12-3.700v-4.500l-6.500-2L18 8.500z" fill="#ff9800" /></svg>
    </Task>
    <Task>
      <svg width="24" height="24" viewBox="0 0 24 24"><path d="M17.500 0L24 2.800v18.400L17.500 24 7 14.500 2.500 18 0 16.800 5 12 0 7.200 2.500 6 7 9.500zM17.500 7L11.500 12l6 5z" fill="#1f8ad2" fillRule="evenodd" /><path d="M17.500 0L24 2.800v18.400L17.500 24z" fill="#32a9f0" /></svg>
    </Task>
    <Task open>
      <svg width="20" height="26" viewBox="0 0 20 26">
        <defs><linearGradient id="drop" x1=".3" y1="0" x2=".6" y2="1"><stop offset=".15" stopColor="#fcd116" /><stop offset=".28" stopColor="#f7941d" /><stop offset=".3" stopColor="#e8467c" /><stop offset=".5" stopColor="#e8467c" /><stop offset=".52" stopColor="#8a55d8" /><stop offset=".68" stopColor="#b04fc7" /><stop offset=".7" stopColor="#1c8fe6" /><stop offset="1" stopColor="#20a4f0" /></linearGradient></defs>
        <path d="M8.500 0c2 4 10.500 9 10.500 16.500a9 9 0 0 1-18 0C1 10 9 7 8.500 0z" fill="url(#drop)" /></svg>
    </Task>
    <div className="flex grow items-center">
      <svg width="15" height="16" viewBox="0 0 15 16" className="ml-[26px]"><circle cx="4.500" cy="8" r="2.700" fill="none" stroke="#fff" strokeWidth="1.100" /><path d="M.6 15.500c0-6 7.800-6 7.800 0" fill="none" stroke="#fff" strokeWidth="1.100" /><circle cx="10" cy="3.300" r="2.700" fill="none" stroke="#fff" strokeWidth="1.100" /><path d="M8.500 8c3-2 6 .5 5.900 3.500" fill="none" stroke="#fff" strokeWidth="1.100" /></svg>
      <span className="ml-[22px]"><Chevron d={UP} s={12} c="#fff" sw={0.9} /></span>
      <svg width="17" height="11" viewBox="0 0 17 11" className="ml-[9px]"><path d="M3 10A3.500 3.500 0 0 1 3 4.500 4.500 4.500 0 0 1 11 3l3 4v3z" fill="#aaa" /><path d="M4.500 11L10 5.500c4-1.500 7 1 7 3.500a2 2 0 0 1-2 2z" fill="#f4f4f4" /></svg>
      <svg width="15" height="9" viewBox="0 0 15 9" className="ml-[8px]"><path d="M.6.6h12.300v7.800H.6z" fill="none" stroke="#fff" strokeWidth="1.200" /><path d="M2.300 2.300h7v4.400h-7z" fill="#fff" /><path d="M13.500 3h1.500v3h-1.500z" fill="#fff" /></svg>
      <div className="ml-[6px] w-[32px] text-center text-[11.300px] leading-[16.500px]">POR<br />PTB2</div>
      <div className="ml-[5px] w-[64px] pb-px text-center text-[11.300px] leading-[17.500px] tracking-[-0.200px]">10:56<br />20/04/2020</div>
      <div className="relative ml-[14px] h-[26px] w-[26px]">
        <svg width="18" height="18" viewBox="0 0 18 18" className="mt-[3px]"><path d="M1 0h16v13H8l-4 4v-4H1z" fill="#fff" /><path d="M3.500 3.500h11M3.500 6.500h11M3.500 9.500h7" stroke="#111" strokeWidth="1.200" /></svg>
        <span className="absolute top-[12px] left-[7px] flex size-[17px] items-center justify-center rounded-full border border-[#999] bg-[#30343a] text-[11px] leading-none font-bold">4</span>
      </div>
    </div>
    <div className="mr-[4px] h-[40px] w-px bg-[#666]" />
  </div>
);

export default function App() {
  return (
    <div className="relative h-[768px] w-[1366px] overflow-hidden bg-linear-to-b from-[#001a38] via-[#003a6c] via-55% to-[#001c3e] font-['Open_Sans','Noto_Sans',sans-serif]">
      <Desktop />
      <Browser />
      <GitHubDesktop />
      <Explorer />
      <div className="absolute top-[264px] left-[244px] h-[46px] w-[500px] border-3 border-[#88001b]" />
      <div className="absolute top-[434px] left-[370px] text-[27.500px] leading-[39px] whitespace-pre text-black">{'Veja que o\nrepositório já está\ncriado em sua\nmáquina'}</div>
      <Taskbar />
    </div>
  );
}
